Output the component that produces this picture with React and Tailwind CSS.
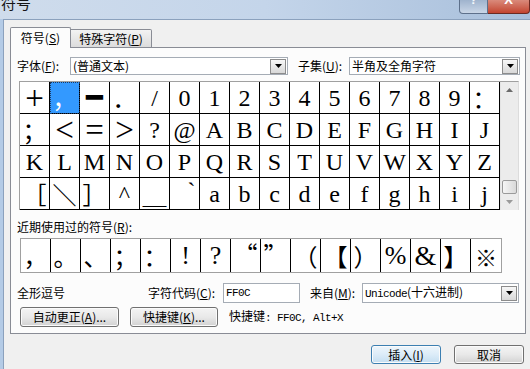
const S = "font-['Liberation_Serif',serif] text-[24px]";
const BIG = "font-['Liberation_Serif',serif] text-[33px] leading-[26px]";
const C = "font-['Noto_Sans_CJK_SC',sans-serif] text-[24px]";
const DASH = "font-['DejaVu_Sans_Mono',monospace] text-[28px] leading-[26px]";
const MONO = "font-['Liberation_Mono',monospace] text-[11px] tracking-[-0.6px]";

const rows = [
  [["+", BIG], ["，", C, true], ["━", DASH], ["．", C], ["/", S], ["0", S], ["1", S], ["2", S], ["3", S], ["4", S], ["5", S], ["6", S], ["7", S], ["8", S], ["9", S], ["：", C]],
  [["；", C], ["<", BIG], ["=", BIG], [">", BIG], ["?", S], ["@", S], ["A", S], ["B", S], ["C", S], ["D", S], ["E", S], ["F", S], ["G", S], ["H", S], ["I", S], ["J", S]],
  [["K", S], ["L", S], ["M", S], ["N", S], ["O", S], ["P", S], ["Q", S], ["R", S], ["S", S], ["T", S], ["U", S], ["V", S], ["W", S], ["X", S], ["Y", S], ["Z", S]],
  [["［", C], ["＼", C], ["］", C], ["^", S], ["＿", C], ["`", "font-['Liberation_Serif',serif] text-[24px] pl-[14px] -mt-[6px]"], ["a", S], ["b", S], ["c", S], ["d", S], ["e", S], ["f", S], ["g", S], ["h", S], ["i", S], ["j", S]],
];

const SR = "font-['Liberation_Serif',serif] text-[26px]";
const recent = [
  ["，", C], ["。", C], ["、", C], ["；", C], ["：", C], ["!", SR], ["?", SR],
  ["“", "font-['Noto_Sans_CJK_SC',sans-serif] text-[24px] -mt-[4px]"],
  ["”", "font-['Noto_Sans_CJK_SC',sans-serif] text-[24px] -mt-[4px]"],
  ["（", C], ["【", C], ["）", C], ["%", SR], ["&", "font-['Liberation_Serif',serif] text-[28px]"], ["】", C], ["※", "font-['Noto_Sans_CJK_SC',sans-serif] text-[22px]"],
];

function Tri({ color = "#000" }) {
  return (
    <svg width="7" height="4" viewBox="0 0 7 4">
      <polygon points="0,0 7,0 3.5,4" fill={color} />
    </svg>
  );
}

function DropBtn() {
  return (
    <div className="w-[16px] h-[15px] mr-[1px] border border-[#8c8c8c] bg-linear-to-b from-[#f7f7f7] to-[#d8d8d8] flex items-center justify-center">
      <Tri />
    </div>
  );
}

function Combo({ cls, children }) {
  return (
    <div className={`${cls} border border-[#a5acb5] bg-white flex items-center`}>
      <div className="flex-1 pl-[2px] whitespace-nowrap leading-none">{children}</div>
      <DropBtn />
    </div>
  );
}

function Btn({ cls, def, children }) {
  return (
    <div
      className={`${cls} h-full rounded-[3px] border ${
        def
          ? "border-[#3c7fb1] bg-linear-to-b from-[#eef6fc] via-[#dcecf8] to-[#c4def1]"
          : "border-[#707070] bg-linear-to-b from-[#f4f4f4] via-[#e9e9e9] to-[#d2d2d2]"
      } shadow-[inset_0_0_0_1px_#fbfbfb] flex items-center justify-center whitespace-nowrap leading-none`}
    >
      {children}
    </div>
  );
}

export default function App() {
  return (
    <div className="w-[530px] h-[369px] overflow-hidden flex flex-col bg-[#b4cbe6] text-[12px] text-black font-['Noto_Sans_CJK_SC',sans-serif]">
      {/* title bar */}
      <div className="h-[19px] shrink-0 flex justify-between bg-linear-to-r from-[#cfdcec] via-[#c4d5ea] to-[#a8bfdb]">
        <div className="ml-[1px] -mt-[5px] text-[15px] leading-[15px] text-[#151515]">符号</div>
        <div className="flex items-start">
          <div className="w-[29px] h-[14px] border border-t-0 border-[#5d708b] rounded-bl-[4px] bg-linear-to-b from-[#9fb3cd] to-[#c9d6e7] flex justify-center overflow-hidden">
            <span className="-mt-[7px] text-[13px] font-bold text-[#f4f7fb] leading-[13px] font-['Liberation_Sans',sans-serif]">?</span>
          </div>
          <div className="w-[42px] h-[14px] border border-t-0 border-l-0 border-[#6b2a22] rounded-br-[4px] bg-linear-to-b from-[#d98a7b] to-[#c2432f] flex justify-center overflow-hidden">
            <span className="-mt-[7px] text-[13px] font-bold text-white leading-[13px] font-['Liberation_Sans',sans-serif]">X</span>
          </div>
        </div>
      </div>

      {/* body */}
      <div className="flex-1 ml-[3px] bg-[#f0f0f0] border-t border-l border-[#8ba1bd] pl-[6px] pt-[7px] flex flex-col">
        {/* tabs */}
        <div className="flex items-end h-[21px] -mb-px relative z-10">
          <div className="w-[61px] h-[21px] border border-b-0 border-[#898c95] bg-[#fcfcfc] rounded-t-[2px] flex items-center justify-center pb-[1px] leading-none">
            符号(<span className="underline">S</span>)
          </div>
          <div className="w-[81px] h-[19px] border border-l-0 border-[#898c95] bg-linear-to-b from-[#f3f3f3] to-[#dcdcdc] rounded-tr-[2px] flex items-center justify-center leading-none">
            特殊字符(<span className="underline">P</span>)
          </div>
        </div>

        {/* panel */}
        <div className="w-[516px] h-[287px] border border-[#898c95] bg-[#fcfcfc] flex flex-col">
          {/* font row */}
          <div className="mt-[9px] h-[18px] flex items-center">
            <div className="ml-[6px] w-[53px] leading-none whitespace-nowrap">字体(<span className="underline">F</span>):</div>
            <Combo cls="w-[218px] h-[18px]">(普通文本)</Combo>
            <div className="ml-[10px] w-[51px] leading-none whitespace-nowrap">子集(<span className="underline">U</span>):</div>
            <Combo cls="w-[171px] h-[18px]">半角及全角字符</Combo>
          </div>

          {/* symbol grid */}
          <div className="mt-[6px] ml-[8px] w-[500px] flex border-t border-l border-r border-[#a0a0a0] border-r-[#dcdcdc] bg-white">
            <div className="grid grid-cols-[repeat(16,30px)]">
              {rows.flat().map(([ch, cls, sel], i) => (
                <div
                  key={i}
                  className={`h-[32px] border-r border-b border-black flex items-center justify-center leading-none ${
                    sel ? "bg-[#3399ff] text-white outline outline-1 outline-dotted outline-[#1c3a63] -outline-offset-1" : ""
                  }`}
                >
                  <span className={cls}>{ch}</span>
                </div>
              ))}
            </div>
            <div className="w-[18px] bg-[#ececec] border-l border-[#e4e4e4] flex flex-col items-center">
              <div className="h-[16px] w-full flex items-center justify-center rotate-180">
                <Tri color="#6b6b6b" />
              </div>
              <div className="flex-1" />
              <div className="w-[15px] h-[14px] rounded-[2px] border border-[#9a9a9a] bg-linear-to-r from-[#f6f6f6] to-[#d9d9d9]" />
              <div className="h-[16px] w-full flex items-center justify-center">
                <Tri color="#9a9a9a" />
              </div>
            </div>
          </div>

          {/* recent */}
          <div className="mt-[10px] ml-[6px] h-[14px] leading-[14px]">近期使用过的符号(<span className="underline">R</span>):</div>
          <div className="mt-[4px] ml-[9px] w-[482px] h-[35px] border border-[#a0a0a0] bg-white flex">
            {recent.map(([ch, cls], i) => (
              <div
                key={i}
                className={`w-[30px] h-full flex items-center justify-center leading-none ${i < 15 ? "border-r border-black" : ""}`}
              >
                <span className={cls}>{ch}</span>
              </div>
            ))}
          </div>

          {/* info row */}
          <div className="mt-[10px] h-[20px] flex items-center">
            <div className="ml-[6px] w-[131px] leading-none">全形逗号</div>
            <div className="w-[75px] leading-none whitespace-nowrap">字符代码(<span className="underline">C</span>):</div>
            <div className="w-[77px] h-[20px] border border-[#a5acb5] bg-white flex items-center pl-[2px]">
              <span className={MONO}>FF0C</span>
            </div>
            <div className="ml-[10px] w-[52px] leading-none whitespace-nowrap">来自(<span className="underline">M</span>):</div>
            <Combo cls="w-[157px] h-[20px]">
              <span className={MONO}>Unicode</span>(十六进制)
            </Combo>
          </div>

          {/* buttons row */}
          <div className="mt-[4px] h-[20px] flex items-center">
            <Btn cls="ml-[9px] w-[99px]">
              自动更正(<span className="underline">A</span>)...
            </Btn>
            <Btn cls="ml-[11px] w-[88px]">
              快捷键(<span className="underline">K</span>)...
            </Btn>
            <div className="ml-[11px] leading-none whitespace-nowrap">
              快捷键<span className={MONO}>: FF0C, Alt+X</span>
            </div>
          </div>
        </div>

        {/* dialog buttons */}
        <div className="mt-[11px] h-[19px] w-[516px] flex justify-end gap-[13px] pr-[2px]">
          <Btn cls="w-[70px]" def>
            插入(<span className="underline">I</span>)
          </Btn>
          <Btn cls="w-[70px]">取消</Btn>
        </div>
      </div>
    </div>
  );
}
